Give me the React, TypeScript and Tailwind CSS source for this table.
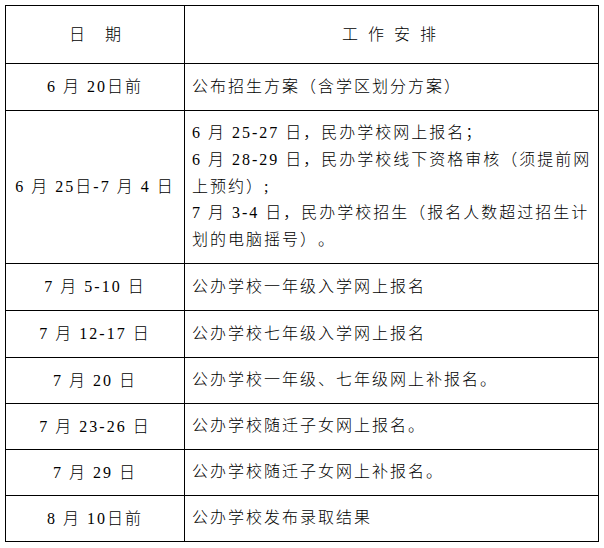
const font = { fontFamily: '"Liberation Serif", "Noto Sans CJK SC", serif' };

type Row = { date: string; lines: string[]; h: string };

const rows: Row[] = [
  { date: "6 月 20日前", lines: ["公布招生方案（含学区划分方案）"], h: "h-[47px]" },
  {
    date: "6 月 25日-7 月 4 日",
    lines: [
      "6 月 25-27 日，民办学校网上报名；",
      "6 月 28-29 日，民办学校线下资格审核（须提前网",
      "上预约）;",
      "7 月 3-4 日，民办学校招生（报名人数超过招生计",
      "划的电脑摇号）。",
    ],
    h: "h-[153px]",
  },
  { date: "7 月 5-10 日", lines: ["公办学校一年级入学网上报名"], h: "h-[47px]" },
  { date: "7 月 12-17 日", lines: ["公办学校七年级入学网上报名"], h: "h-[47px]" },
  { date: "7 月 20 日", lines: ["公办学校一年级、七年级网上补报名。"], h: "h-[46px]" },
  { date: "7 月 23-26 日", lines: ["公办学校随迁子女网上报名。"], h: "h-[46px]" },
  { date: "7 月 29 日", lines: ["公办学校随迁子女网上补报名。"], h: "h-[46px]" },
  { date: "8 月 10日前", lines: ["公办学校发布录取结果"], h: "h-[45px]" },
];

export default function App() {
  return (
    <div
      className="min-h-[548px] w-[604px] bg-white pt-[5px] pl-[5px] font-light text-black [text-spacing-trim:space-all]"
      style={font}
    >
      <div className="flex w-[594px] flex-col border border-black text-[16px]">
        <div className="flex h-[58px] border-b border-black">
          <div className="flex w-[179px] items-center justify-center gap-[20px] border-r border-black">
            <span>日</span>
            <span>期</span>
          </div>
          <div className="flex flex-1 items-center justify-center gap-[10px] pr-[5px]">
            <span>工</span>
            <span>作</span>
            <span>安</span>
            <span>排</span>
          </div>
        </div>
        {rows.map((r, i) => (
          <div
            key={r.date}
            className={`flex ${r.h} ${i < rows.length - 1 ? "border-b border-black" : ""}`}
          >
            <div className="flex w-[179px] items-center justify-center whitespace-nowrap border-r border-black tracking-[2px]">
              {r.date}
            </div>
            <div className="flex flex-1 flex-col justify-center pl-[7px] leading-[26.75px] tracking-[2px]">
              {r.lines.map((l) => (
                <div key={l} className="whitespace-nowrap">
                  {l}
                </div>
              ))}
            </div>
          </div>
        ))}
      </div>
    </div>
  );
}
